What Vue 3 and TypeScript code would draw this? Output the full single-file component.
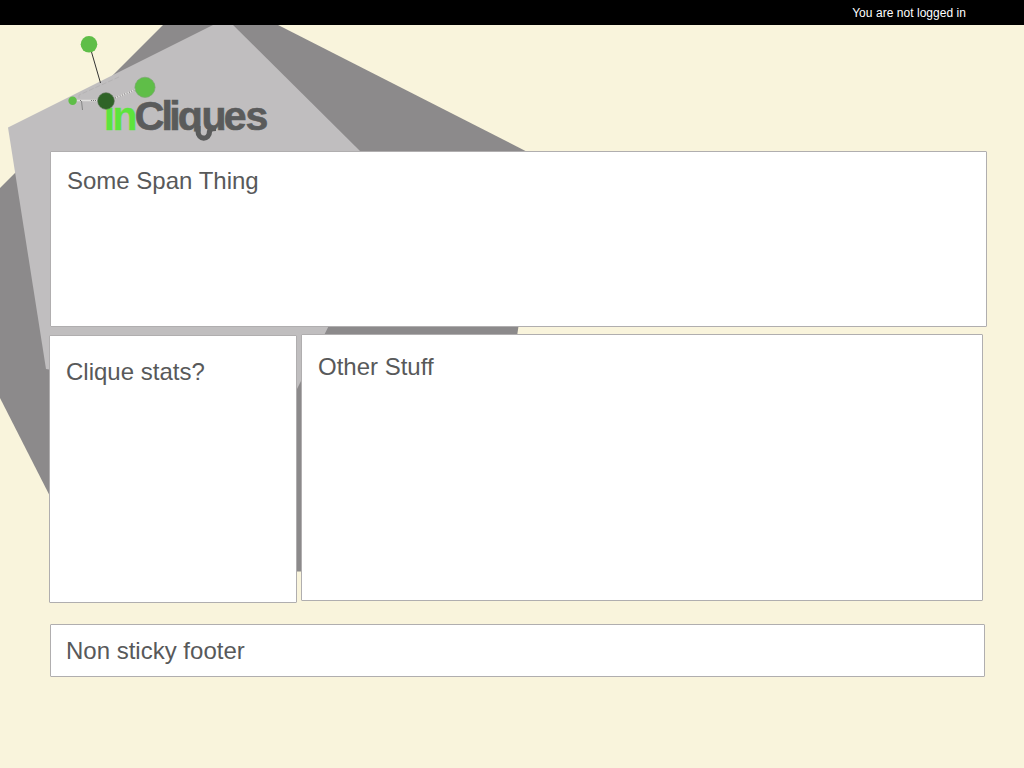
<script setup lang="ts">
interface Panel {
  name: string
  title: string
}

const intro: Panel = { name: 'intro', title: 'Some Span Thing' }
const columns: Panel[] = [
  { name: 'stats', title: 'Clique stats?' },
  { name: 'other', title: 'Other Stuff' },
]
const footer: Panel = { name: 'footer', title: 'Non sticky footer' }
</script>

<template>
  <div class="page">
    <svg class="backdrop" width="1024" height="768" viewBox="0 0 1024 768" aria-hidden="true">
      <polygon class="dark" points="0,188 188,0 229,0 525.500,151 543,160 487,540 301,571.500 88,571 0,398" />
      <polygon class="light" points="8,127.500 223,20 228,20 360,151 382,220 297,389 270,405 46,369" />
    </svg>

    <header class="topbar"><span>You are not logged in</span></header>

    <div class="brand">
      <svg class="logo" width="220" height="126" viewBox="50 25 220 126" role="img" aria-label="inCliques">
        <clipPath id="above-baseline"><rect x="50" y="25" width="220" height="106.500" /></clipPath>
        <path class="stem" d="M91.500 52 100.500 83" />
        <path class="faint" d="M79 98V95L119 77" />
        <path class="link-pale" d="M76 100.500H97M115 98 136 89.500" />
        <path class="link-dots" d="M80 100.500H82M91 100.500H97" />
        <path class="link-beads" d="M115 98 136 89.500" />
        <path class="tick" d="M81.500 101 82.500 110" />
        <g clip-path="url(#above-baseline)">
          <text class="word green" y="130" x="103.700 112.500">in</text>
          <text class="word" y="130.300" x="134.700 161.500 169.300 177.700 201.500 223.700 245.500">Cliques</text>
        </g>
        <path class="hook" d="M198 126V131C198 140.500 209.500 140.500 209.500 131.500Q210 128.500 216 128.500" />
        <circle class="rim" cx="145" cy="87.300" r="10.100" />
        <circle class="leaf" cx="89" cy="44.300" r="8.300" />
        <circle class="leaf" cx="72.600" cy="100.700" r="4.200" />
        <circle class="core" cx="106" cy="101" r="8.300" />
      </svg>
    </div>

    <main>
      <section class="panel intro"><h2>{{ intro.title }}</h2></section>
      <div class="columns">
        <section v-for="p in columns" :key="p.name" class="panel" :class="p.name">
          <h2>{{ p.title }}</h2>
        </section>
      </div>
    </main>
    <footer class="panel footer"><h2>{{ footer.title }}</h2></footer>
  </div>
</template>

<style>
body {
  margin: 0;
  background: #f9f4dc;
}
</style>

<style scoped>
.page {
  position: relative;
  width: 1024px;
  height: 768px;
  overflow: hidden;
  background: #f9f4dc;
  font-family: "Liberation Sans", Arial, sans-serif;
}
.backdrop {
  position: absolute;
  inset: 0;
}
.dark { fill: #8c8a8b; }
.light { fill: #c0bebf; }
.topbar {
  position: relative;
  box-sizing: border-box;
  height: 25px;
  padding-right: 58px;
  background: #000;
  color: #fff;
  font-size: 12px;
  line-height: 26px;
  letter-spacing: 0.04px;
  text-align: right;
}
.brand {
  position: relative;
  height: 126px;
  padding-left: 50px;
}
.logo { display: block; }
.logo path { fill: none; }
.word {
  font-size: 41px;
  font-weight: bold;
  fill: #5a5b5b;
  stroke: #5a5b5b;
  stroke-width: 0.7;
}
.word.green {
  fill: #5de43c;
  stroke: #5de43c;
  stroke-width: 0.3;
}
.logo .hook {
  stroke: #5a5b5b;
  stroke-width: 5.2;
}
.stem {
  stroke: #333;
  stroke-width: 1;
}
.faint {
  stroke: #b5b3b4;
  stroke-width: 1;
  stroke-dasharray: 5 2;
}
.link-pale {
  stroke: #e2e1df;
  stroke-width: 1.4;
}
.link-dots {
  stroke: #777;
  stroke-width: 1;
  stroke-dasharray: 1 1;
}
.link-beads {
  stroke: #8a8889;
  stroke-width: 1.4;
  stroke-dasharray: 1 1.5;
}
.tick {
  stroke: #858585;
  stroke-width: 1;
}
.leaf { fill: #5fbe48; }
.rim {
  fill: #5fbe48;
  stroke: #7ea575;
  stroke-width: 0.7;
}
.core {
  fill: #2f6427;
  stroke: #596f54;
  stroke-width: 0.6;
}
main { position: relative; }
.panel {
  position: relative;
  box-sizing: border-box;
  background: #fff;
  border: 1px solid #b0aeaf;
  border-radius: 1px;
}
h2 {
  margin: 0;
  color: #58595a;
  font-size: 24px;
  font-weight: normal;
  line-height: 28px;
}
.intro {
  width: 937px;
  height: 176px;
  margin-left: 50px;
  padding: 15px 16px;
}
.columns {
  display: flex;
  gap: 4px;
  margin: 7px 0 0 49px;
}
.stats {
  width: 248px;
  height: 268px;
  margin-top: 1px;
  padding: 22px 16px;
}
.other {
  width: 682px;
  height: 267px;
  padding: 18px 16px;
}
.footer {
  width: 935px;
  height: 53px;
  margin: 21px 0 0 50px;
  padding: 12px 15px;
}
</style>
